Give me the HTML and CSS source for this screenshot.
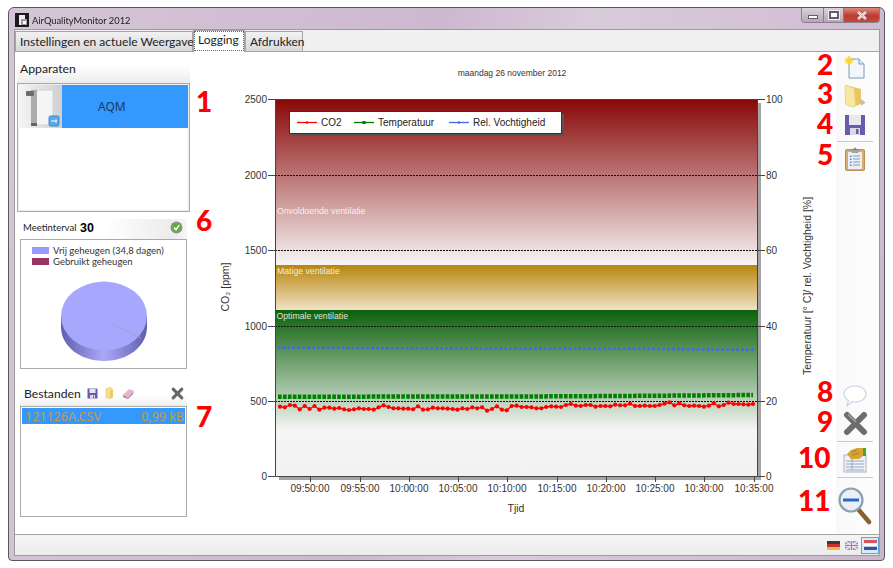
FILE: index.html
```html
<!DOCTYPE html>
<html lang="nl">
<head>
<meta charset="utf-8">
<title>AirQualityMonitor 2012</title>
<link rel="stylesheet" href="styles.css">
</head>
<body>
<div class="window">
  <div class="titlebar">
    <svg class="appicon" width="14" height="14" viewBox="0 0 14 14"><rect width="14" height="14" fill="#1a1a1a"/><path d="M4 2h6v10H4z" fill="#eee"/><path d="M6 6h6v6H6z" fill="#9a9a9a"/><path d="M8 8h3v3H8z" fill="#fff"/></svg>
    <span class="title">AirQualityMonitor 2012</span>
    <div class="caption">
      <div class="capbtn capmin"><span class="glyph-min"></span></div>
      <div class="capbtn capmax"><span class="glyph-max"></span></div>
      <div class="capbtn capclose">
        <svg width="12" height="9" viewBox="0 0 12 9"><path d="M2 1l8 7M10 1L2 8" stroke="#fff" stroke-width="2.4"/><path d="M2 1l8 7M10 1L2 8" stroke="#6b5a68" stroke-width=".5"/></svg>
      </div>
    </div>
  </div>
  <div class="client">
    <div class="tabs">
      <div class="tab tab-a">Instellingen en actuele Weergave</div>
      <div class="tab tab-active">Logging</div>
      <div class="tab tab-c">Afdrukken</div>
    </div>
    <div class="page">
      <aside class="sidebar">
        <div class="header">Apparaten</div>
        <div class="devices">
          <div class="device">
            <div class="device-pic">
              <svg width="44" height="43" viewBox="0 0 44 43"><defs><linearGradient id="devbg" x1="0" x2="1" y1="0" y2="0"><stop offset="0" stop-color="#f6f6f6"/><stop offset="1" stop-color="#cfcfcf"/></linearGradient></defs><rect width="44" height="43" fill="url(#devbg)"/><rect x="15" y="5" width="20" height="35" fill="#f5f5f5" stroke="#d2d2d2"/><rect x="13" y="5" width="6" height="35" fill="#adadad"/><rect x="8" y="6" width="8" height="5" rx="1" fill="#6d6d6d"/><rect x="13" y="38" width="6" height="3" fill="#666"/><rect x="31" y="31" width="10" height="10" rx="1.5" fill="#57a9ec" stroke="#3d8acb"/><path d="M33 36h6M38 34.5v3" stroke="#fff"/></svg>
            </div>
            <div class="device-name">AQM</div>
          </div>
        </div>
        <div class="interval">
          <span class="interval-label">Meetinterval</span>
          <span class="interval-value">30</span>
          <svg class="interval-ok" width="13" height="13" viewBox="0 0 13 13"><circle cx="6.5" cy="6.5" r="6" fill="#8f8f8f"/><circle cx="6.5" cy="6.5" r="4.4" fill="#55b32f"/><path d="M4 6.5l2 2.2 3.2-4.6" fill="none" stroke="#fff" stroke-width="1.5"/></svg>
        </div>
        <div class="memory">
          <div class="mem-legend"><span class="swatch swatch-free"></span>Vrij geheugen (34,8 dagen)</div>
          <div class="mem-legend"><span class="swatch swatch-used"></span>Gebruikt geheugen</div>
          <svg class="pie" width="90" height="84" viewBox="0 0 90 84">
            <defs><linearGradient id="pieside" x1="0" x2="1" y1="0" y2="0"><stop offset="0" stop-color="#5f5fac"/><stop offset=".5" stop-color="#a9a9f8"/><stop offset="1" stop-color="#5f5fac"/></linearGradient></defs>
            <path d="M2 36v11c0 19 19 34 43 34s43-15 43-34V36z" fill="url(#pieside)"/>
            <ellipse cx="45" cy="36" rx="43" ry="34.500" fill="#a7a7fd"/>
            <path d="M53 44L82 58" stroke="#b296c9" stroke-width=".8"/>
          </svg>
        </div>
        <div class="files-head">
          <span class="files-title">Bestanden</span>
          <svg width="11" height="11" viewBox="0 0 22 22"><path d="M1 1h20v20H1z" fill="#6a5aad"/><path d="M5 2h12v8H5z" fill="#e6e6ee"/><path d="M6 14h10v7H6z" fill="#dcdce6"/><path d="M12 15h2v5h-2z" fill="#6a5aad"/></svg>
          <svg width="10" height="12" viewBox="0 0 20 24"><path d="M2 3l9-2 4 3v17l-5 2-8-2z" fill="#f6e193" stroke="#d8b95a"/><path d="M10 5l6 1v14l-6 2z" fill="#eccb63"/></svg>
          <svg width="13" height="11" viewBox="0 0 13 11"><path d="M1 7l6-6 5 2-6 7z" fill="#e6b4cf"/><path d="M1 7l5 3 6-7-1 3-5 5-5-2z" fill="#a8779a"/></svg>
          <svg class="files-x" width="13" height="13" viewBox="0 0 30 30"><path d="M5 5l20 20M25 5L5 25" stroke="#666" stroke-width="7" stroke-linecap="round"/></svg>
        </div>
        <div class="files">
          <div class="file"><span>121126A.CSV</span><span>0,99 kB</span></div>
        </div>
      </aside>
      <main class="chart">
        <svg width="644" height="482" viewBox="192 52 644 482">
          <defs>
            <linearGradient id="gred" x1="0" x2="0" y1="0" y2="1"><stop offset="0" stop-color="#880707"/><stop offset="1" stop-color="#f8f5f5"/></linearGradient>
            <linearGradient id="ggold" x1="0" x2="0" y1="0" y2="1"><stop offset="0" stop-color="#b8860b"/><stop offset="1" stop-color="#f0e2c6"/></linearGradient>
            <linearGradient id="ggreen" x1="0" x2="0" y1="0" y2="1"><stop offset="0" stop-color="#0a610a"/><stop offset="1" stop-color="#f5f5f5"/></linearGradient>
            <linearGradient id="ggrey" x1="0" x2="0" y1="0" y2="1"><stop offset="0" stop-color="#f5f5f5"/><stop offset="1" stop-color="#f2f2f2"/></linearGradient>
            <marker id="mred" markerUnits="userSpaceOnUse" markerWidth="6" markerHeight="6" refX="3" refY="3"><circle cx="3" cy="3" r="2.100" fill="#ff0000"/></marker>
          </defs>
          <text class="t date" x="512" y="76">maandag 26 november 2012</text>

          <rect class="shadow" x="757" y="103" width="4" height="377"/>
          <rect class="shadow" x="279" y="476" width="482" height="4"/>
          <rect x="275" y="99" width="482" height="166" fill="url(#gred)"/>
          <rect x="275" y="265" width="482" height="45" fill="url(#ggold)"/>
          <rect x="275" y="310" width="482" height="120" fill="url(#ggreen)"/>
          <rect x="275" y="430" width="482" height="46" fill="url(#ggrey)"/>

          <path class="grid" d="M275 175.500H757M275 250.500H757M275 326.500H757M275 401.500H757"/>
          <text class="zone" x="277" y="214">Onvoldoende ventilatie</text>
          <text class="zone" x="277" y="274">Matige ventilatie</text>
          <text class="zone" x="276.500" y="319">Optimale ventilatie</text>

          <path class="axis" d="M275.500 99V476.500H757.500V99M275 99.500H757"/>
          <path class="axis" d="M268 99.500h7M268 175.500h7M268 250.500h7M268 326.500h7M268 401.500h7M268 476.500h7M758 99.500h7M758 175.500h7M758 250.500h7M758 326.500h7M758 401.500h7M758 476.500h7"/>
          <path class="axis" d="M310.500 477v5M360.500 477v5M409.500 477v5M458.500 477v5M507.500 477v5M557.500 477v5M606.500 477v5M655.500 477v5M704.500 477v5M754.500 477v5"/>

          <g class="t lab-r">
            <text x="267" y="103">2500</text><text x="267" y="179">2000</text><text x="267" y="254">1500</text><text x="267" y="330">1000</text><text x="267" y="405">500</text><text x="267" y="480">0</text>
          </g>
          <g class="t lab-l">
            <text x="766" y="103">100</text><text x="766" y="179">80</text><text x="766" y="254">60</text><text x="766" y="330">40</text><text x="766" y="405">20</text><text x="766" y="480">0</text>
          </g>
          <g class="t lab-c">
            <text x="310" y="492">09:50:00</text><text x="360" y="492">09:55:00</text><text x="409" y="492">10:00:00</text><text x="458" y="492">10:05:00</text><text x="507" y="492">10:10:00</text><text x="557" y="492">10:15:00</text><text x="606" y="492">10:20:00</text><text x="655" y="492">10:25:00</text><text x="704" y="492">10:30:00</text><text x="754" y="492">10:35:00</text>
          </g>
          <text class="axis-title" x="516" y="512">Tjid</text>
          <text class="axis-title" transform="translate(229 287) rotate(-90)">CO₂ [ppm]</text>
          <text class="axis-title" transform="translate(811 286) rotate(-90)">Temperatuur [° C]/ rel. Vochtigheid [%]</text>

          <path class="s-blue" d="M279 347.600L400 348.300L520 348.600L640 348.800L753 349.700"/>
          <path class="s-green" d="M278 396.700L520 396.500L620 396L753 395"/>
          <g transform="translate(280 0)">
            <polyline class="s-red" points="0,406.700 4.900,407.300 9.900,405 14.800,405.700 19.700,409.300 24.700,406 29.600,409 34.500,406 39.400,409.700 44.400,407.700 49.300,407.700 54.200,408.700 59.200,408 64.100,409.300 69,410 74,409.300 78.900,408.300 83.800,409 88.700,409 93.700,409.700 98.600,407.300 103.500,405.300 108.500,407 113.400,408.300 118.300,408.300 123.300,408.700 128.200,408.700 133.100,409.300 138,406.300 143,409.700 147.900,409.300 152.800,407.700 157.800,408.300 162.700,408.300 167.600,408.700 172.600,409 177.500,409.700 182.400,408.300 187.300,409 192.300,407.300 197.200,408.300 202.100,407.300 207.100,410.700 212,409 216.900,406.300 221.900,409.700 226.800,410.300 231.700,406 236.600,405.700 241.600,407 246.500,407 251.400,407.300 256.400,408.300 261.300,408.300 266.200,407 271.200,406.300 276.100,406.700 281,407 285.900,405 290.900,404 295.800,405.700 300.700,406 305.700,405 310.600,405 315.500,406.700 320.500,406 325.400,406 330.300,406.300 335.200,404.700 340.200,405.300 345.100,405.300 350,403.700 355,406 359.900,406 364.800,405.700 369.800,406 374.700,406 379.600,405 384.500,403.700 389.500,402.300 394.400,405.300 399.300,403.300 404.300,405.300 409.200,406 414.100,405.700 419.100,406 424,406.700 428.900,405.700 433.800,403.300 438.800,406.300 443.700,405 448.600,402.700 453.600,404 458.500,404 463.400,404.300 468.400,404.700 473,404"/>
          </g>

          <rect x="292" y="114" width="272" height="22" fill="#555"/>
          <rect class="legend-box" x="289.500" y="111.500" width="272" height="22"/>
          <path d="M297 122.500h20" stroke="#ff0000" stroke-width="1.300"/><circle cx="307" cy="122.500" r="1.200" fill="#ff0000"/>
          <path d="M354 122.500h20" stroke="#007a00" stroke-width="1.300"/><rect x="362.500" y="121" width="3" height="3" fill="#007a00"/>
          <path d="M449 122.500h20" stroke="#4169e1" stroke-width="1.300"/><circle cx="459" cy="122.500" r="1.200" fill="#4169e1"/>
          <g class="legend-text"><text x="321" y="126">CO2</text><text x="378" y="126">Temperatuur</text><text x="473" y="126">Rel. Vochtigheid</text></g>
        </svg>
      </main>
      <nav class="toolbar">
        <div class="tool tool-24">
          <svg width="24" height="24" viewBox="0 0 24 24"><path d="M6 4h10l5 5v14H6z" fill="#f3f7fc" stroke="#7f98bb"/><path d="M16 4v5h5" fill="#dfe8f4" stroke="#7f98bb"/><path d="M6 1v9M1.500 5.500h9M3 2.500l6 6M9 2.500l-6 6" stroke="#f6d636" stroke-width="1.500"/></svg>
        </div>
        <div class="tool tool-24">
          <svg width="24" height="24" viewBox="0 0 24 24"><path d="M6 2l12 3v15l-8 3z" fill="#e9c463"/><path d="M2 3c0-1.500 1-2 2-1.800L10 4c1 .3 1.500 1 1.500 2l1 15c0 1.500-1 2-2 2-3-.5-5.500-1.500-8-3z" fill="#f8e7a2" stroke="#e3c873" stroke-width=".7"/><path d="M18 15l4.500 3.500L18 22z" fill="#bdbdbd"/></svg>
        </div>
        <div class="tool tool-24">
          <svg width="22" height="22" viewBox="0 0 22 22"><path d="M1 1h20v20H1z" fill="#6a5aad"/><path d="M5 1h12v10H5z" fill="#e8e8ee"/><path d="M6 14h10v7H6z" fill="#d9d9e3"/><path d="M12 15h2.500v5H12z" fill="#6a5aad"/></svg>
        </div>
        <div class="sep"></div>
        <div class="tool tool-24">
          <svg width="20" height="24" viewBox="0 0 20 24"><rect x=".5" y="2.500" width="19" height="21" rx="1" fill="#d9ae6c" stroke="#b98f52"/><rect x="3" y="5" width="14" height="17" fill="#e8eff8"/><path d="M7 2.500h6v3H7zM9 1h2v2H9z" fill="#a9a9a9" stroke="#777" stroke-width=".5"/><path d="M8 9h7M8 12h7M8 15h7M8 18h7" stroke="#8d99ad"/><path d="M5 8.500h1.500v1.500H5zM5 11.500h1.500V13H5zM5 14.500h1.500V16H5zM5 17.500h1.500V19H5z" fill="#6c7d98"/></svg>
        </div>
        <div class="spring"></div>
        <div class="tool tool-22">
          <svg width="24" height="22" viewBox="0 0 24 22"><path d="M12 1c6 0 11 3 11 8s-5 8-11 8c-1 0-2 0-3-.2L4 21l1.500-5.500C3 14 1 12 1 9c0-5 5-8 11-8z" fill="#fff" stroke="#c5d3e3" stroke-width="1.200"/></svg>
        </div>
        <div class="tool tool-x">
          <svg width="25" height="25" viewBox="0 0 25 25"><path d="M4 4l17 17M21 4L4 21" stroke="#6d6d6d" stroke-width="6" stroke-linecap="round"/><path d="M5 3.500L13 11" stroke="#a3a3a3" stroke-width="1.500"/></svg>
        </div>
        <div class="sep sep-low"></div>
        <div class="tool tool-26">
          <svg width="24" height="26" viewBox="0 0 24 26"><rect x="1" y="8" width="22" height="17" fill="#eef2f8" stroke="#a9b4c4"/><path d="M3 14h18M3 17h18M3 20h18M3 23h18M9 12v11" stroke="#98a8c0"/><path d="M4 7l4-4 6-2h6v8l-4 3H8z" fill="#d4a435"/><path d="M9 5l5-2M9 8l7-2" stroke="#a87f22"/><rect x="20" y="1" width="3" height="8" fill="#4aa829"/></svg>
        </div>
        <div class="sep sep-low2"></div>
        <div class="tool tool-mag">
          <svg width="34" height="38" viewBox="0 0 34 38"><path d="M20 22l11 13" stroke="#8a5f2f" stroke-width="4.500" stroke-linecap="round"/><circle cx="13" cy="13" r="11.500" fill="#e9f0f6" stroke="#8ea0ad" stroke-width="2.200"/><path d="M5 13h16" stroke="#2d64c8" stroke-width="3"/></svg>
        </div>
      </nav>
    </div>
    <div class="statusbar">
      <svg width="13" height="9" viewBox="0 0 13 9"><rect width="13" height="3" fill="#3a3a3a"/><rect y="3" width="13" height="3" fill="#c9332c"/><rect y="6" width="13" height="3" fill="#e8bb3c"/></svg>
      <svg width="13" height="9" viewBox="0 0 13 9"><rect width="13" height="9" fill="#8f96cf"/><path d="M0 0l13 9M13 0L0 9" stroke="#f0e8ee" stroke-width="1.500"/><path d="M6.500 0v9M0 4.500h13" stroke="#f0e8ee" stroke-width="2.500"/><path d="M6.500 0v9M0 4.500h13" stroke="#d46c7c" stroke-width="1"/></svg>
      <div class="flag-active">
        <svg width="13" height="10" viewBox="0 0 13 10"><rect width="13" height="3.300" fill="#d8545a"/><rect y="3.300" width="13" height="3.400" fill="#fff"/><rect y="6.700" width="13" height="3.300" fill="#3f4f9b"/></svg>
      </div>
    </div>
  </div>
  <span class="num n1">1</span><span class="num n2">2</span><span class="num n3">3</span><span class="num n4">4</span><span class="num n5">5</span><span class="num n6">6</span><span class="num n7">7</span><span class="num n8">8</span><span class="num n9">9</span><span class="num n10">10</span><span class="num n11">11</span>
</div>
</body>
</html>
```
FILE: styles.css
```css
* { box-sizing: border-box; }
html, body { margin: 0; padding: 0; background: #fff; }
body { width: 893px; height: 568px; overflow: hidden; font-family: Lato, "Open Sans", sans-serif; color: #222; }

.window {
  position: relative;
  width: 877px; height: 554px;
  margin: 7px 0 0 8px;
  padding: 0 4px 4px 5px;
  border: 1px solid #5a5560;
  border-radius: 6px 6px 4px 4px;
  background: linear-gradient(100deg, #d4c6d6 0%, #cdb9cf 45%, #d8cbda 60%, #d3c2d5 80%, #c9b8cc 100%);
  display: flex; flex-direction: column;
  filter: blur(.35px);
}

.titlebar { height: 21px; flex: none; display: flex; align-items: center; gap: 3px; padding: 3px 0 0 1px; }
.appicon { flex: none; }
.title { font-size: 9.300px; color: #1a1a1a; }
.caption { margin: -3px 0 0 auto; height: 15px; align-self: flex-start; display: flex; border: 1px solid #8a7e8e; border-top: 0; border-radius: 0 0 4px 4px; overflow: hidden; }
.capbtn { display: flex; align-items: center; justify-content: center; background: linear-gradient(#dbd0dc, #b5a7b8); border-right: 1px solid #8a7e8e; }
.capmin { width: 22px; }
.capmax { width: 20px; }
.capclose { width: 35px; border-right: 0; background: linear-gradient(#d98a80, #c23a2c 55%, #b94c40); }
.glyph-min { width: 10px; height: 4px; margin-top: 4px; background: #fff; border: 1px solid #6b5a68; }
.glyph-max { width: 10px; height: 8px; background: #fff; border: 2px solid #6b5a68; outline: 1px solid #f3eef3; }

.client { flex: 1; min-height: 0; display: flex; flex-direction: column; border: 1px solid #9c9aa0; background: #f0f0f0; }
.tabs { height: 22px; flex: none; display: flex; align-items: flex-end; border-bottom: 1px solid #a5a5a5; }
.tab { height: 20px; font-size: 12px; line-height: 19px; padding: 0 4px; white-space: nowrap; background: linear-gradient(#f2f2f2, #d9d9d9); border: 1px solid #a5a5a5; border-bottom: 0; }
.tab-a { width: 178px; }
.tab-active { width: 52px; height: 22px; margin-bottom: -1px; background: #fff; line-height: 18px; outline: 1px dotted #666; outline-offset: -2px; }
.tab-c { width: 58px; }

.page { flex: 1; min-height: 0; display: flex; background: #fff; }
.sidebar { width: 177px; flex: none; display: flex; flex-direction: column; padding: 2px 0 0 2px; }
.header { height: 29px; width: 173px; flex: none; font-size: 12.200px; line-height: 30px; padding-left: 3px; background: linear-gradient(#fff, #fff 40%, #ececec); }
.devices { height: 129px; width: 173px; flex: none; border: 1px solid #a9a9a9; box-shadow: inset 0 0 0 1px #eee; padding: 1px 1px 1px 0; }
.device { display: flex; height: 43px; }
.device-pic { width: 44px; height: 43px; flex: none; }
.device-name { flex: 1; background: #3399ff; display: flex; align-items: center; padding-left: 36px; font-size: 12px; color: #1d3a5c; font-family: "Noto Sans", sans-serif; }

.interval { margin: 7px 0 0 3px; height: 20px; width: 167px; flex: none; display: flex; align-items: center; padding-bottom: 3px; background: linear-gradient(90deg, #fff 85px, #ececec 150px, #f6f6f6); }
.interval-label { font-size: 9.500px; width: 57px; margin-left: 3px; }
.interval-value { font-size: 12.500px; font-weight: 700; color: #000; font-family: "Liberation Sans", sans-serif; }
.interval-ok { margin-left: auto; margin-right: 4px; }

.memory { margin-left: 3px; height: 130px; width: 167px; flex: none; border: 1px solid #a9a9a9; padding: 5px 0 0 11px; display: flex; flex-direction: column; }
.mem-legend { height: 11px; font-size: 9.500px; line-height: 11px; display: flex; align-items: center; color: #333; white-space: nowrap; }
.swatch { width: 17px; height: 7px; margin-right: 4px; flex: none; }
.swatch-free { background: #9999ff; }
.swatch-used { background: #993366; }
.pie { margin: 13px 0 0 27px; flex: none; }

.files-head { margin: 9px 0 0 3px; height: 28px; width: 167px; flex: none; display: flex; align-items: center; gap: 7px; padding: 2px 0 0 4px; background: linear-gradient(#fff 60%, #eee); }
.files-title { font-size: 12.200px; width: 56px; }
.files-x { margin-left: auto; margin-right: 3px; }
.files { margin-left: 3px; height: 111px; width: 167px; flex: none; border: 1px solid #a9a9a9; padding: 1px; }
.file { height: 16px; padding: 0 1px 0 3px; display: flex; justify-content: space-between; align-items: center; background: #3399ff; color: #c79a3d; font-size: 12.500px; font-family: "Noto Sans", sans-serif; }

.chart { flex: 1; min-width: 0; }
.chart svg { display: block; }
.t, .legend-text, .axis-title { font-family: "Liberation Sans", sans-serif; fill: #333; }
.t { font-size: 10px; }
.axis-title { font-size: 10.500px; text-anchor: middle; }
.t.date { font-size: 8.500px; text-anchor: middle; }
.lab-r { text-anchor: end; }
.lab-l { text-anchor: start; }
.lab-c { text-anchor: middle; }
.legend-text { font-size: 10px; fill: #222; }
.zone { font-family: "Liberation Sans", sans-serif; font-size: 8.700px; fill: #fff; fill-opacity: .85; }
.shadow { fill: #a4a4a4; }
.grid { stroke: #111; stroke-dasharray: 2 1; fill: none; }
.axis { stroke: #444; fill: none; }
.legend-box { fill: #fff; stroke: #333; }
.s-blue { fill: none; stroke: #4169e1; stroke-width: 3.200; stroke-linecap: round; stroke-dasharray: 0 4.930; }
.s-green { fill: none; stroke: #008000; stroke-width: 4.500; stroke-dasharray: 3.700 1.230; }
.s-red { fill: none; stroke: #ff0000; stroke-width: 1.300; marker-start: url(#mred); marker-mid: url(#mred); marker-end: url(#mred); }

.toolbar { width: 43px; flex: none; display: flex; flex-direction: column; align-items: flex-start; padding: 3px 0 9px 1px; background: linear-gradient(90deg, #f9f9f9, #fdfdfd); }
.tool { flex: none; display: flex; align-items: center; justify-content: center; width: 36px; }
.tool-24 { height: 24px; margin-bottom: 5px; }
.tool-22 { height: 22px; margin-bottom: 4px; }
.tool-x { height: 25px; }
.tool-26 { height: 26px; }
.tool-mag { height: 38px; }
.sep { width: 36px; height: 1px; flex: none; background: #c9c9c9; margin: -1px 0 5px; }
.sep-low { margin: 5px 0 5px; }
.sep-low2 { margin: 4px 0 9px; }
.spring { flex: 1; }

.statusbar { height: 21px; flex: none; display: flex; align-items: center; justify-content: flex-end; gap: 5px; border-top: 1px solid #a5a5a5; background: linear-gradient(#f5f5f5, #ececec); }
.flag-active { width: 18px; height: 17px; margin-left: -2px; display: flex; align-items: center; justify-content: center; background: #d6ecfb; border: 1px solid #59a6dd; }

.num { position: absolute; font-family: Lato, "Open Sans", sans-serif; font-weight: 900; font-size: 28px; line-height: 22px; color: #ff0000; }
.n1 { left: 187px; top: 82px; }
.n2 { left: 808px; top: 45px; }
.n3 { left: 808px; top: 74px; }
.n4 { left: 808px; top: 104px; }
.n5 { left: 808px; top: 135px; }
.n6 { left: 187px; top: 201px; }
.n7 { left: 187px; top: 397px; }
.n8 { left: 808px; top: 372px; }
.n9 { left: 808px; top: 402px; }
.n10 { left: 789px; top: 438px; }
.n11 { left: 789px; top: 481px; }
```
